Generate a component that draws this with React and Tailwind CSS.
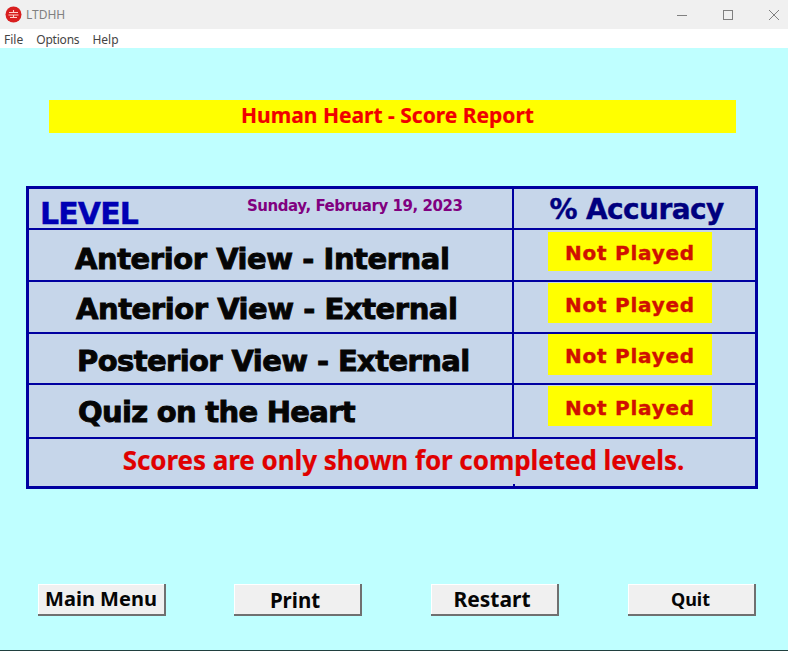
function Row({ label, indent, height, textPad, pill, track }) {
  return (
    <div className={`flex border-b-2 border-[#0000a0] ${height}`}>
      <div className={`flex-1 flex items-center ${indent} ${textPad} ${track} text-[29px] font-bold text-[#050505] font-['DejaVu_Sans',sans-serif] [-webkit-text-stroke:0.9px_#050505] whitespace-nowrap`}>
        {label}
      </div>
      <div className="w-[243px] border-l-2 border-[#0000a0] pl-[34px]">
        <div className={`w-[164px] ${pill} bg-[#ffff00] flex items-center justify-center pt-[3px] text-[#d01000] text-[20px] font-bold font-['DejaVu_Sans',sans-serif] tracking-[0.75px] [-webkit-text-stroke:0.4px_#d01000]`}>
          Not Played
        </div>
      </div>
    </div>
  );
}

function Btn({ children, className }) {
  return (
    <button className={`w-[128px] h-[32px] bg-[#f0f0f0] border-r-2 border-b-2 border-[#707070] shadow-[inset_1px_1px_0_#ffffff] text-[#050505] font-bold font-['Noto_Sans',sans-serif] leading-none ${className}`}>
      {children}
    </button>
  );
}

export default function App() {
  return (
    <div className="w-[788px] h-[651px] flex flex-col overflow-hidden bg-[#bfffff] font-['Noto_Sans',sans-serif]">
      <div className="h-[29px] bg-[#f0f0f0] flex items-center pl-[5px] shrink-0">
        <svg width="17" height="17" viewBox="0 0 17 17">
          <circle cx="8.5" cy="8.5" r="8" fill="#d81e1e" />
          <path d="M4 6.5h9M3.5 9h10M5 11.5h7M8.5 4v2.5M8.5 9v3" stroke="#ffd0c8" strokeWidth="1.1" fill="none" />
        </svg>
        <span className="ml-[4px] text-[12px] text-[#808080]">LTDHH</span>
        <div className="ml-auto flex items-center gap-[34px] pr-[8px]">
          <svg width="12" height="12" viewBox="0 0 12 12"><path d="M1 6.5h10" stroke="#808080" strokeWidth="1" /></svg>
          <svg width="12" height="12" viewBox="0 0 12 12"><rect x="1.5" y="1.5" width="9" height="9" fill="none" stroke="#808080" strokeWidth="1" /></svg>
          <svg width="12" height="12" viewBox="0 0 12 12"><path d="M1 1l10 10M11 1L1 11" stroke="#808080" strokeWidth="1" /></svg>
        </div>
      </div>
      <div className="h-[19px] bg-white flex items-center gap-[13px] pl-[4px] pt-[2px] text-[12px] text-[#444444] shrink-0">
        <span>File</span>
        <span className="tracking-[-0.2px]">Options</span>
        <span>Help</span>
      </div>
      <div className="flex-1 flex flex-col border-b border-[#20403f]">
        <div className="mt-[52px] ml-[49px] w-[687px] h-[33px] bg-[#ffff00] flex items-center justify-center pr-[10px] pb-[2px] text-[#f00000] text-[21px] font-bold [-webkit-text-stroke:0.2px_#f00000]">
          Human Heart - Score Report
        </div>
        <div className="mt-[53px] ml-[26px] w-[732px] h-[303px] bg-[#c6d6ea] border-[3px] border-[#0000a0] flex flex-col relative">
          <div className="flex h-[41px] border-b-2 border-[#0000a0]">
            <div className="flex-1 flex">
              <span className="ml-[11px] mt-[5px] text-[#0000b4] text-[30px] leading-[40px] font-bold font-['DejaVu_Sans',sans-serif] tracking-[-0.9px] [-webkit-text-stroke:0.4px_#0000b4]">LEVEL</span>
              <span className="ml-[109px] mt-[7px] text-[#800080] text-[15px] font-bold leading-[20px] font-['DejaVu_Sans',sans-serif] tracking-[-0.45px]">Sunday, February 19, 2023</span>
            </div>
            <div className="w-[243px] border-l-2 border-[#0000a0] flex items-center justify-center pl-[4px] pt-[2px] text-[#00007f] text-[28px] font-bold font-['DejaVu_Sans',sans-serif] tracking-[-0.6px] [-webkit-text-stroke:0.4px_#00007f]">
              % Accuracy
            </div>
          </div>
          <Row label="Anterior View - Internal" indent="pl-[46px]" textPad="pt-[10px]" track="tracking-[-0.45px]" pill="mt-[2px] h-[39px]" height="h-[52px]" />
          <Row label="Anterior View - External" indent="pl-[47px]" textPad="pt-[6px]" track="tracking-[-0.45px]" pill="mt-[1px] h-[40px]" height="h-[52px]" />
          <Row label="Posterior View - External" indent="pl-[48px]" textPad="pt-[7px]" track="tracking-[-0.6px]" pill="h-[41px]" height="h-[51px]" />
          <Row label="Quiz on the Heart" indent="pl-[49px]" textPad="pt-[4px]" track="tracking-[-0.7px]" pill="mt-[1px] h-[40px]" height="h-[54px]" />
          <div className="flex-1 flex items-center justify-center pl-[23px] pb-[4px] text-[#e00000] text-[26px] tracking-[-0.06px] font-bold [-webkit-text-stroke:0.2px_#e00000]">
            Scores are only shown for completed levels.
          </div>
          <div className="absolute left-[484px] bottom-[-3px] w-[2px] h-[5px] bg-[#0000a0]" />
        </div>
        <div className="mt-[95px] pl-[38px] flex">
          <Btn className="text-[20px] pb-[1px]">Main Menu</Btn>
          <Btn className="ml-[68px] text-[20.5px] pr-[4px] pt-[2px]">Print</Btn>
          <Btn className="ml-[69px] text-[21px] pr-[4px]">Restart</Btn>
          <Btn className="ml-[69px] text-[18px] pb-[1px] pr-[1px]">Quit</Btn>
        </div>
      </div>
    </div>
  );
}
